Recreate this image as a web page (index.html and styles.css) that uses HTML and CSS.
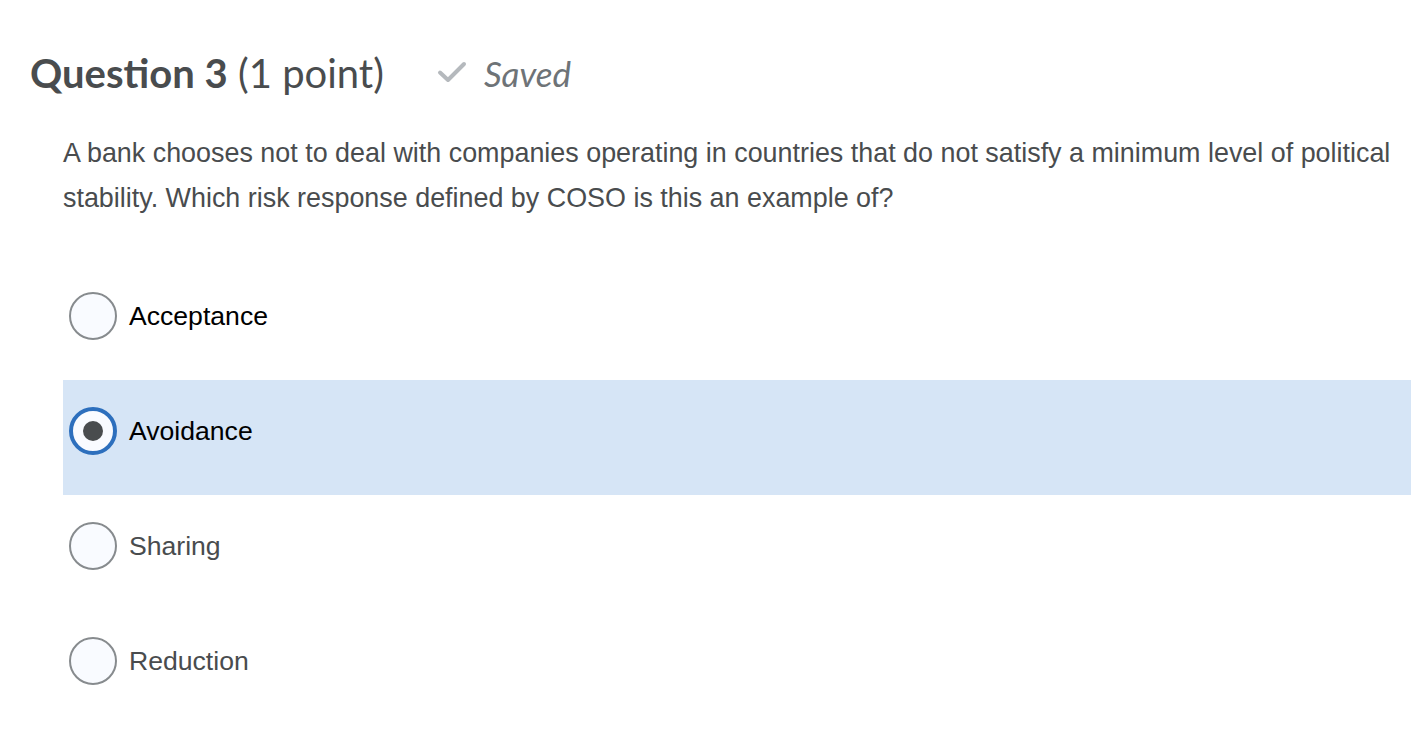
FILE: index.html
```html
<!DOCTYPE html>
<html lang="en">
<head>
<meta charset="utf-8">
<title>Question 3</title>
<link rel="stylesheet" href="styles.css">
</head>
<body>
<div class="page">
  <div class="qhead">
    <h2 class="qtitle"><strong>Question 3</strong> (1 point)</h2>
    <div class="saved">
      <svg class="check" width="30" height="22" viewBox="0 0 30 22"><path d="M3 11.5 L11 19 L27 3" fill="none" stroke="#b5b9bd" stroke-width="4" stroke-linecap="round" stroke-linejoin="round"/></svg>
      <span>Saved</span>
    </div>
  </div>
  <div class="qbody">
    <p class="qtext">A bank chooses not to deal with companies operating in countries that do not satisfy a minimum level of political stability. Which risk response defined by COSO is this an example of?</p>
    <div class="options">
      <label class="opt dark"><span class="radio"></span><span class="lbl">Acceptance</span></label>
      <label class="opt dark selected"><span class="radio on"></span><span class="lbl">Avoidance</span></label>
      <label class="opt"><span class="radio"></span><span class="lbl">Sharing</span></label>
      <label class="opt"><span class="radio"></span><span class="lbl">Reduction</span></label>
    </div>
  </div>
</div>
</body>
</html>
```
FILE: styles.css
```css
html, body {
  margin: 0;
  padding: 0;
  background: #ffffff;
}
.page {
  padding: 49px 17px 0 30px;
  color: #494c4e;
}
.qhead {
  display: flex;
  align-items: center;
  gap: 53px;
  height: 48px;
}
.qtitle {
  margin: 0;
  font-family: Lato, "Open Sans", sans-serif;
  font-weight: 400;
  font-size: 40px;
  line-height: 48px;
  color: #494c4e;
}
.qtitle strong {
  font-weight: 700;
}
.saved {
  display: flex;
  align-items: center;
  gap: 17px;
  font-family: Lato, "Open Sans", sans-serif;
  font-style: italic;
  font-size: 35px;
  color: #6e7377;
}
.check {
  display: block;
  margin-top: -3px;
}
.qbody {
  padding-left: 33px;
}
.qtext {
  margin: 34px 0 0 0;
  font-family: "Liberation Sans", Arial, sans-serif;
  font-size: 26.9px;
  line-height: 45px;
  color: #494c4e;
}
.options {
  margin-top: 44px;
  display: flex;
  flex-direction: column;
}
.opt {
  display: flex;
  align-items: center;
  gap: 12px;
  height: 115px;
  box-sizing: border-box;
  padding: 0 6px 13px 6px;
  font-family: "Liberation Sans", Arial, sans-serif;
  font-size: 26.6px;
  color: #494c4e;
}
.opt.dark {
  color: #000000;
}
.opt.selected {
  background: #d6e5f6;
}
.radio {
  width: 48px;
  height: 48px;
  box-sizing: border-box;
  border: 2px solid #878b8e;
  border-radius: 50%;
  background: #f9fbff;
  flex: none;
  display: flex;
  align-items: center;
  justify-content: center;
}
.radio.on {
  border: 4px solid #2d6fbd;
}
.radio.on::after {
  content: "";
  width: 20px;
  height: 20px;
  border-radius: 50%;
  background: #494c4e;
}
```
